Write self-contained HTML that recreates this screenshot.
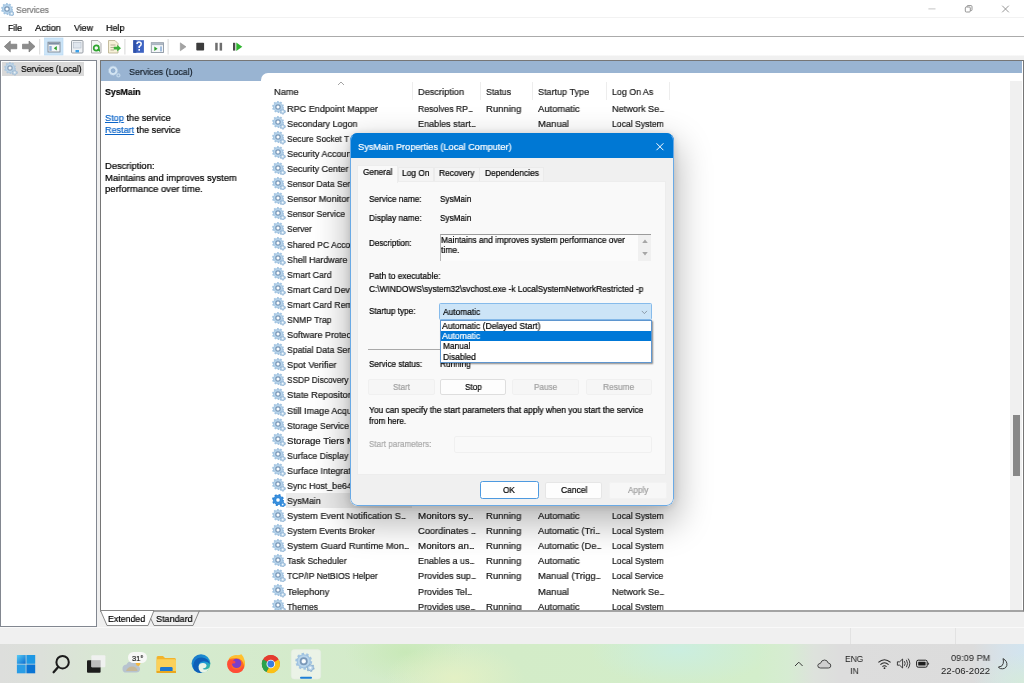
<!DOCTYPE html>
<html><head><meta charset="utf-8"><title>Services</title>
<style>
*{box-sizing:border-box;margin:0;padding:0}
html,body{width:1024px;height:683px;overflow:hidden;background:#f0f0f0}
body{font-family:"Liberation Sans",sans-serif;font-size:10px;color:#000;position:relative;line-height:13px}
.abs{position:absolute}
.t{position:absolute;white-space:nowrap;transform-origin:0 0;will-change:transform;-webkit-text-stroke:.22px}
.lk{color:#0a64c8;text-decoration:underline}
.el{letter-spacing:-1.2px}
.g,.gs{position:absolute;left:272.2px;width:13.5px;height:13.5px}
#titlebar{left:0;top:0;width:1024px;height:18px;background:#fff;border-bottom:1px solid #f2f2f2}
#menubar{left:0;top:18px;width:1024px;height:18px;background:#fff}
#toolbar{left:0;top:36px;width:1024px;height:24px;background:linear-gradient(#fff 0,#fff 17.5px,#f0f0f0 19.5px,#f0f0f0 24px);border-top:1px solid #ababab}
#left{left:0;top:60px;width:97px;height:566.6px;background:#fff;border:1px solid #828790}
#right{left:99.5px;top:59.5px;width:924px;height:552px;background:#fff;border:1.5px solid #767676;border-bottom:2px solid #a4a4a4}
#hdr{left:101px;top:61px;width:921.4px;height:20.2px;background:#99b4d2}
#list{left:261.3px;top:72.8px;width:760.7px;height:537px;background:#fff;border-radius:7px 0 0 0}
#scroll{left:1010px;top:81px;width:12px;height:529px;background:#f0f0f0}
#thumb{left:1012.5px;top:415px;width:7.5px;height:60.5px;background:#888}
#status{left:0;top:626.6px;width:1024px;height:17.4px;background:#f0f0f0;border-top:1px solid #f9f9f9}
#taskbar{left:0;top:644px;width:1024px;height:39px;background:radial-gradient(ellipse 70px 34px at 455px 34px,rgba(230,241,196,.85),rgba(230,241,196,0) 100%),radial-gradient(ellipse 60px 30px at 405px 8px,rgba(198,232,180,.8),rgba(198,232,180,0) 100%),radial-gradient(ellipse 90px 36px at 680px 6px,rgba(202,238,226,.9),rgba(202,238,226,0) 100%),radial-gradient(ellipse 50px 30px at 1024px 39px,rgba(214,236,214,.8),rgba(214,236,214,0) 100%),linear-gradient(90deg,#dddedc 0%,#dce0da 4%,#d9e6d4 9%,#d6ead0 14%,#d4ebcb 30%,#d3ecc8 50%,#d3edc9 65%,#d3eecb 74%,#d6ecd2 77%,#dde2dc 79.5%,#dddddd 82%,#dcdcdc 95%,#d6e2ea 98%,#d2e4ef 100%)}
#rows{left:0;top:0;width:1022px;height:609.5px;overflow:hidden}
/* dialog */
#dshadow{left:350px;top:133.2px;width:324.1px;height:372.6px;border-radius:8px;box-shadow:0 14px 34px 4px rgba(0,0,0,.28),0 1px 8px rgba(0,0,0,.15)}
#dlg{left:350px;top:133.2px;width:324.1px;height:372.6px;background:#f0f0f0;border-radius:7.5px;overflow:hidden}
#dlg:after{content:"";position:absolute;left:0;top:0;right:0;bottom:0;border:1.9px solid #6aaae5;border-radius:7.5px;border-top-color:#0078d4}
#dtitle{left:-1px;top:-0.2px;width:326px;height:25.4px;background:#0078d4}
#dtab{left:6px;top:47.8px;width:309.3px;height:294px;background:#f9f9f9;border:1px solid #ededed}
.tab{position:absolute;top:33.8px;height:14px;background:#f4f4f4;border:1px solid #ebebeb;border-bottom:none}
.btn{position:absolute;border:1px solid #dedede;background:#fdfdfd;border-radius:2px}
.btn.dis{border-color:#f0f0f0;background:#f6f6f6}
</style></head><body>
<svg width="0" height="0" style="position:absolute"><defs>
<g id="gear">
 <circle cx="6" cy="6" r="5.1" fill="none" stroke="#a2c4e1" stroke-width="1.7" stroke-dasharray="1.7 1.504"/>
 <circle cx="6" cy="6" r="4.6" fill="#b7d4eb" stroke="#9fc2e0" stroke-width=".8"/>
 <circle cx="6" cy="6" r="2.2" fill="#e3eef7" stroke="#7a98b8" stroke-width="1.2"/>
 <circle cx="6" cy="6" r="1.2" fill="#fbfdfe"/>
 <circle cx="10.7" cy="10.6" r="2.3" fill="none" stroke="#8fb2d2" stroke-width="1.3" stroke-dasharray="1.1 1.31"/>
 <circle cx="10.7" cy="10.6" r="2.1" fill="#bcd6ea" stroke="#8fb2d2" stroke-width=".7"/>
 <circle cx="10.7" cy="10.6" r=".8" fill="#f4f8fb"/>
</g>
<g id="gears">
 <circle cx="6" cy="6" r="5.1" fill="none" stroke="#2b83d4" stroke-width="1.7" stroke-dasharray="2 2.005"/>
 <circle cx="6" cy="6" r="4.6" fill="#3d93e0" stroke="#2b83d4" stroke-width=".8"/>
 <circle cx="6" cy="6" r="2.7" fill="#5aa6e8" stroke="#2b83d4" stroke-width=".8"/>
 <circle cx="6" cy="6" r="1.7" fill="#fff"/>
 <circle cx="10.7" cy="10.6" r="2.3" fill="none" stroke="#2b83d4" stroke-width="1.3" stroke-dasharray="1.1 1.31"/>
 <circle cx="10.7" cy="10.6" r="2.1" fill="#4a9be3" stroke="#2b83d4" stroke-width=".7"/>
 <circle cx="10.7" cy="10.6" r=".8" fill="#fff"/>
</g>
</defs></svg>

<div id="titlebar" class="abs"></div>
<div id="menubar" class="abs"></div>
<div id="toolbar" class="abs"></div>
<div id="left" class="abs"></div>
<div id="right" class="abs"></div>
<div id="hdr" class="abs"></div>
<div id="list" class="abs"></div>
<div id="scroll" class="abs"></div>
<div id="thumb" class="abs"></div>
<div id="status" class="abs"></div>
<div class="abs" style="left:849.5px;top:628px;width:1px;height:16px;background:#e2e2e2"></div>
<div class="abs" style="left:955px;top:628px;width:1px;height:16px;background:#e2e2e2"></div>
<div id="taskbar" class="abs"></div>

<!-- bottom view tabs -->
<svg class="abs" style="left:98px;top:609px" width="110" height="18" viewBox="0 0 110 18">
 <path d="M2.5 1.5 L9 16.5 L50 16.5 L56 1.5 Z" fill="#fff" stroke="#7d7d7d" stroke-width="0.9"/>
 <path d="M52.7 9.5 L56 16.5 L95 16.5 L101.5 1.5" fill="none" stroke="#7d7d7d" stroke-width="0.9"/>
 <path d="M56.5 1.5 L101.5 1.5" fill="none" stroke="#a0a0a0" stroke-width="0.9"/>
</svg>

<!-- title icon -->
<svg class="abs" style="left:0.8px;top:2.6px;width:13.5px;height:13.5px" viewBox="0 0 13.5 13.5"><use href="#gear"/></svg>
<!-- left tree icon -->

<!-- header icon (magnifier-like) -->
<svg class="abs" style="left:107px;top:64px;width:16px;height:16px" viewBox="0 0 16 16">
 <circle cx="6.1" cy="6.7" r="3.3" fill="none" stroke="#d3e4f2" stroke-width="2.3"/>
 <circle cx="6.1" cy="6.7" r="4.6" fill="none" stroke="#bcd3e8" stroke-width=".7" stroke-dasharray="1.6 1.3"/>
 <circle cx="6.1" cy="6.7" r="1.9" fill="none" stroke="#86a8cb" stroke-width=".7"/>
 <circle cx="11.4" cy="11.4" r="1.5" fill="none" stroke="#c3d8ea" stroke-width="1.3"/>
</svg>

<!-- window controls -->
<svg class="abs" style="left:920px;top:0" width="104" height="18" viewBox="0 0 104 18">
 <path d="M8.4 8.9 H15.5" stroke="#c4c4c4" stroke-width="1"/>
 <rect x="45.3" y="7" width="5" height="5" rx="1" fill="none" stroke="#8a8a8a" stroke-width="0.9"/>
 <path d="M47 7 V6.3 Q47 5.6 47.8 5.6 H51 Q52 5.6 52 6.6 V9.8 Q52 10.6 51.2 10.6 H50.5" fill="none" stroke="#8a8a8a" stroke-width="0.9"/>
 <path d="M82.2 5.7 L88.8 12.3 M88.8 5.7 L82.2 12.3" stroke="#8a8a8a" stroke-width="0.9"/>
</svg>

<!-- toolbar icons -->
<svg class="abs" style="left:0;top:37px" width="250" height="20" viewBox="0 0 250 20">
 <!-- back / forward -->
 <path d="M4.3 9.5 L10.3 4 V7.2 H16.8 V11.8 H10.3 V15 Z" fill="#8c8c8c" stroke="#6e6e6e" stroke-width=".6"/>
 <path d="M35 9.5 L29 4 V7.2 H22.5 V11.8 H29 V15 Z" fill="#8c8c8c" stroke="#6e6e6e" stroke-width=".6"/>
 <rect x="39.2" y="2" width="1" height="15.5" fill="#d8d8d8"/>
 <!-- selected button -->
 <rect x="44.6" y="1" width="18.4" height="17" fill="#cce4f7" stroke="#b3d7f3" stroke-width=".6"/>
 <rect x="48" y="5.2" width="12" height="9.8" fill="#f4f6f8" stroke="#7d8793" stroke-width=".9"/>
 <rect x="48.4" y="5.6" width="11.2" height="2" fill="#7f8fa3"/>
 <rect x="49.3" y="9" width="2.4" height="4.8" fill="#8fb0d8"/>
 <path d="M56.8 9 L53.8 11.3 L56.8 13.6 Z" fill="#2ca02c"/>
 <!-- properties sheet -->
 <rect x="71.5" y="3.5" width="11.5" height="12.5" rx="1" fill="#eef1f4" stroke="#8e959d" stroke-width=".9"/>
 <rect x="73.5" y="5.5" width="7.5" height="5.5" fill="#dfe6ee" stroke="#a9b4c0" stroke-width=".5"/>
 <rect x="75.5" y="13" width="3.5" height="2.4" fill="#3aa0e8"/>
 <!-- refresh -->
 <path d="M91.5 3.5 H98 L101 6.5 V16 H91.5 Z" fill="#f6f6f6" stroke="#9a9a9a" stroke-width=".8"/>
 <circle cx="96.3" cy="11" r="2.6" fill="none" stroke="#2fa52f" stroke-width="1.7"/>
 <path d="M96.6 12.2 L100 12.2 L100 15 Z" fill="#2fa52f"/>
 <!-- export -->
 <path d="M108.5 3.5 H115 L118 6.5 V16 H108.5 Z" fill="#f6f0d8" stroke="#b8ad8a" stroke-width=".8"/>
 <path d="M110.5 8 H115.5 M110.5 10.5 H114 M110.5 13 H114" stroke="#9a9478" stroke-width=".7"/>
 <path d="M113.8 9.8 H117.2 V7.8 L121 11.2 L117.2 14.6 V12.6 H113.8 Z" fill="#3bb03b"/>
 <rect x="124.4" y="2" width="1" height="15.5" fill="#d8d8d8"/>
 <!-- help -->
 <rect x="133.3" y="3.2" width="10.6" height="12.6" fill="#3d63c2"/>
 <rect x="133.3" y="3.2" width="3" height="12.6" fill="#2f51a8"/>
 <path d="M137 7 Q137 5 139 5 Q141.2 5 141.2 7 Q141.2 8.4 139.2 9.6 V11" fill="none" stroke="#fff" stroke-width="1.5"/>
 <rect x="138.4" y="12" width="1.6" height="1.7" fill="#fff"/>
 <!-- window w/ play -->
 <rect x="151.3" y="5.7" width="12.2" height="9.8" fill="#f4f6f8" stroke="#8d97a3" stroke-width=".9"/>
 <rect x="151.7" y="6.1" width="11.4" height="2" fill="#aab4c0"/>
 <path d="M154.3 9.6 L157.6 11.8 L154.3 14 Z" fill="#2ca02c"/>
 <rect x="160.2" y="9.4" width="1.6" height="5" fill="#8fb0d8"/>
 <rect x="167.6" y="2" width="1" height="15.5" fill="#d8d8d8"/>
 <!-- play / stop / pause / resume -->
 <path d="M180.3 5.8 L186 9.8 L180.3 13.8 Z" fill="#a3a3a3" stroke="#8c8c8c" stroke-width=".5"/>
 <rect x="196.3" y="5.8" width="7.8" height="7.8" rx=".8" fill="#3c3c3c"/>
 <rect x="215.2" y="5.8" width="2.5" height="7.8" fill="#6e6e6e"/>
 <rect x="219.6" y="5.8" width="2.5" height="7.8" fill="#6e6e6e"/>
 <rect x="233" y="5.8" width="2.3" height="7.8" fill="#4a4a4a"/>
 <path d="M236.3 5.4 L242.3 9.7 L236.3 14 Z" fill="#2fb52f"/>
</svg>

<div class="t" style="left:16.20px;top:3.00px;font-size:9.6px;line-height:13px;color:#7a7a7a;transform:scaleX(0.8936);">Services</div>
<div class="t" style="left:8.20px;top:21.00px;font-size:9.6px;line-height:13px;color:#000;transform:scaleX(0.9123);">File</div>
<div class="t" style="left:35.20px;top:21.00px;font-size:9.6px;line-height:13px;color:#000;transform:scaleX(0.9742);">Action</div>
<div class="t" style="left:74.20px;top:21.00px;font-size:9.6px;line-height:13px;color:#000;transform:scaleX(0.9205);">View</div>
<div class="t" style="left:106.00px;top:21.00px;font-size:9.6px;line-height:13px;color:#000;transform:scaleX(0.9327);">Help</div>
<div class="abs" style="left:2px;top:62px;width:82px;height:14px;background:#d9d9d9"></div>
<svg class="abs" style="left:4.2px;top:62.3px;width:13.5px;height:13.5px;opacity:.8" viewBox="0 0 13.5 13.5"><use href="#gear"/></svg>
<div class="t" style="left:20.80px;top:62.00px;font-size:9.6px;line-height:13px;color:#000;transform:scaleX(0.8819);">Services (Local)</div>
<div class="t" style="left:128.80px;top:65.00px;font-size:9.6px;line-height:13px;color:#17212c;transform:scaleX(0.9254);">Services (Local)</div>
<div class="t" style="left:105.20px;top:85.00px;font-size:9.6px;line-height:13px;color:#000;font-weight:bold;transform:scaleX(0.9119);">SysMain</div>
<div class="t" style="left:105.20px;top:111.00px;font-size:9.6px;line-height:13px;color:#000;transform:scaleX(0.9545);"><span class="lk">Stop</span> the service</div>
<div class="t" style="left:105.20px;top:123.00px;font-size:9.6px;line-height:13px;color:#000;transform:scaleX(0.9411);"><span class="lk">Restart</span> the service</div>
<div class="t" style="left:105.20px;top:159.00px;font-size:9.6px;line-height:13px;color:#000;transform:scaleX(0.9766);">Description:</div>
<div class="t" style="left:105.20px;top:171.00px;font-size:9.6px;line-height:13px;color:#000;transform:scaleX(0.9810);">Maintains and improves system</div>
<div class="t" style="left:105.20px;top:182.00px;font-size:9.6px;line-height:13px;color:#000;transform:scaleX(0.9910);">performance over time.</div>
<div class="t" style="left:274.30px;top:85.00px;font-size:9.6px;line-height:13px;color:#222;transform:scaleX(0.9636);">Name</div>
<div class="t" style="left:417.70px;top:85.00px;font-size:9.6px;line-height:13px;color:#222;transform:scaleX(0.9604);">Description</div>
<div class="t" style="left:486.00px;top:85.00px;font-size:9.6px;line-height:13px;color:#222;transform:scaleX(0.9186);">Status</div>
<div class="t" style="left:537.70px;top:85.00px;font-size:9.6px;line-height:13px;color:#222;transform:scaleX(0.9421);">Startup Type</div>
<div class="t" style="left:611.70px;top:85.00px;font-size:9.6px;line-height:13px;color:#222;transform:scaleX(0.9212);">Log On As</div>
<div class="abs" style="left:412.0px;top:82px;width:1px;height:18px;background:#ededed"></div>
<div class="abs" style="left:480.0px;top:82px;width:1px;height:18px;background:#ededed"></div>
<div class="abs" style="left:532.0px;top:82px;width:1px;height:18px;background:#ededed"></div>
<div class="abs" style="left:606.0px;top:82px;width:1px;height:18px;background:#ededed"></div>
<div class="abs" style="left:668.7px;top:82px;width:1px;height:18px;background:#ededed"></div>
<svg class="abs" style="left:337px;top:80.5px" width="8" height="5" viewBox="0 0 8 5"><path d="M1 4 L4 1 L7 4" fill="none" stroke="#9a9a9a" stroke-width="0.9"/></svg>
<div id="rows" class="abs">
<svg class="g" style="top:101.20px" viewBox="0 0 13.5 13.5"><use href="#gear"/></svg>
<div class="t" style="left:287.30px;top:102.00px;font-size:9.6px;line-height:13px;color:#1a1a1a;transform:scaleX(0.9474);">RPC Endpoint Mapper</div>
<div class="t" style="left:417.70px;top:102.00px;font-size:9.6px;line-height:13px;color:#1a1a1a;transform:scaleX(0.9019);">Resolves RP<span class="el">...</span></div>
<div class="t" style="left:485.80px;top:102.00px;font-size:9.6px;line-height:13px;color:#1a1a1a;transform:scaleX(0.9871);">Running</div>
<div class="t" style="left:537.70px;top:102.00px;font-size:9.6px;line-height:13px;color:#1a1a1a;transform:scaleX(0.9796);">Automatic</div>
<div class="t" style="left:611.70px;top:102.00px;font-size:9.6px;line-height:13px;color:#1a1a1a;transform:scaleX(0.9519);">Network Se<span class="el">...</span></div>
<svg class="g" style="top:116.29px" viewBox="0 0 13.5 13.5"><use href="#gear"/></svg>
<div class="t" style="left:287.30px;top:117.00px;font-size:9.6px;line-height:13px;color:#1a1a1a;transform:scaleX(0.9380);">Secondary Logon</div>
<div class="t" style="left:417.70px;top:117.00px;font-size:9.6px;line-height:13px;color:#1a1a1a;transform:scaleX(0.9432);">Enables start<span class="el">...</span></div>
<div class="t" style="left:537.70px;top:117.00px;font-size:9.6px;line-height:13px;color:#1a1a1a;transform:scaleX(0.9845);">Manual</div>
<div class="t" style="left:611.70px;top:117.00px;font-size:9.6px;line-height:13px;color:#1a1a1a;transform:scaleX(0.9003);">Local System</div>
<svg class="g" style="top:131.38px" viewBox="0 0 13.5 13.5"><use href="#gear"/></svg>
<div class="t" style="left:287.30px;top:132.00px;font-size:9.6px;line-height:13px;color:#1a1a1a;transform:scaleX(0.8759);">Secure Socket T</div>
<svg class="g" style="top:146.47px" viewBox="0 0 13.5 13.5"><use href="#gear"/></svg>
<div class="t" style="left:287.30px;top:147.00px;font-size:9.6px;line-height:13px;color:#1a1a1a;transform:scaleX(0.9369);">Security Accoun</div>
<svg class="g" style="top:161.56px" viewBox="0 0 13.5 13.5"><use href="#gear"/></svg>
<div class="t" style="left:287.30px;top:162.00px;font-size:9.6px;line-height:13px;color:#1a1a1a;transform:scaleX(0.9283);">Security Center</div>
<svg class="g" style="top:176.65px" viewBox="0 0 13.5 13.5"><use href="#gear"/></svg>
<div class="t" style="left:287.30px;top:177.00px;font-size:9.6px;line-height:13px;color:#1a1a1a;transform:scaleX(0.8912);">Sensor Data Ser</div>
<svg class="g" style="top:191.74px" viewBox="0 0 13.5 13.5"><use href="#gear"/></svg>
<div class="t" style="left:287.30px;top:192.00px;font-size:9.6px;line-height:13px;color:#1a1a1a;transform:scaleX(0.9609);">Sensor Monitor</div>
<svg class="g" style="top:206.83px" viewBox="0 0 13.5 13.5"><use href="#gear"/></svg>
<div class="t" style="left:287.30px;top:207.00px;font-size:9.6px;line-height:13px;color:#1a1a1a;transform:scaleX(0.8926);">Sensor Service</div>
<svg class="g" style="top:221.92px" viewBox="0 0 13.5 13.5"><use href="#gear"/></svg>
<div class="t" style="left:287.30px;top:222.00px;font-size:9.6px;line-height:13px;color:#1a1a1a;transform:scaleX(0.8772);">Server</div>
<svg class="g" style="top:237.01px" viewBox="0 0 13.5 13.5"><use href="#gear"/></svg>
<div class="t" style="left:287.30px;top:238.00px;font-size:9.6px;line-height:13px;color:#1a1a1a;transform:scaleX(0.8988);">Shared PC Acco</div>
<svg class="g" style="top:252.10px" viewBox="0 0 13.5 13.5"><use href="#gear"/></svg>
<div class="t" style="left:287.30px;top:253.00px;font-size:9.6px;line-height:13px;color:#1a1a1a;transform:scaleX(0.9205);">Shell Hardware</div>
<svg class="g" style="top:267.19px" viewBox="0 0 13.5 13.5"><use href="#gear"/></svg>
<div class="t" style="left:287.30px;top:268.00px;font-size:9.6px;line-height:13px;color:#1a1a1a;transform:scaleX(0.9083);">Smart Card</div>
<svg class="g" style="top:282.28px" viewBox="0 0 13.5 13.5"><use href="#gear"/></svg>
<div class="t" style="left:287.30px;top:283.00px;font-size:9.6px;line-height:13px;color:#1a1a1a;transform:scaleX(0.9136);">Smart Card Dev</div>
<svg class="g" style="top:297.37px" viewBox="0 0 13.5 13.5"><use href="#gear"/></svg>
<div class="t" style="left:287.30px;top:298.00px;font-size:9.6px;line-height:13px;color:#1a1a1a;transform:scaleX(0.9136);">Smart Card Rem</div>
<svg class="g" style="top:312.46px" viewBox="0 0 13.5 13.5"><use href="#gear"/></svg>
<div class="t" style="left:287.30px;top:313.00px;font-size:9.6px;line-height:13px;color:#1a1a1a;transform:scaleX(0.9021);">SNMP Trap</div>
<svg class="g" style="top:327.55px" viewBox="0 0 13.5 13.5"><use href="#gear"/></svg>
<div class="t" style="left:287.30px;top:328.00px;font-size:9.6px;line-height:13px;color:#1a1a1a;transform:scaleX(0.9369);">Software Protec</div>
<svg class="g" style="top:342.64px" viewBox="0 0 13.5 13.5"><use href="#gear"/></svg>
<div class="t" style="left:287.30px;top:343.00px;font-size:9.6px;line-height:13px;color:#1a1a1a;transform:scaleX(0.9053);">Spatial Data Ser</div>
<svg class="g" style="top:357.73px" viewBox="0 0 13.5 13.5"><use href="#gear"/></svg>
<div class="t" style="left:287.30px;top:358.00px;font-size:9.6px;line-height:13px;color:#1a1a1a;transform:scaleX(0.9480);">Spot Verifier</div>
<svg class="g" style="top:372.82px" viewBox="0 0 13.5 13.5"><use href="#gear"/></svg>
<div class="t" style="left:287.30px;top:373.00px;font-size:9.6px;line-height:13px;color:#1a1a1a;transform:scaleX(0.8672);">SSDP Discovery</div>
<svg class="g" style="top:387.91px" viewBox="0 0 13.5 13.5"><use href="#gear"/></svg>
<div class="t" style="left:287.30px;top:388.00px;font-size:9.6px;line-height:13px;color:#1a1a1a;transform:scaleX(0.9639);">State Repositor</div>
<svg class="g" style="top:403.00px" viewBox="0 0 13.5 13.5"><use href="#gear"/></svg>
<div class="t" style="left:287.30px;top:404.00px;font-size:9.6px;line-height:13px;color:#1a1a1a;transform:scaleX(0.9432);">Still Image Acqu</div>
<svg class="g" style="top:418.09px" viewBox="0 0 13.5 13.5"><use href="#gear"/></svg>
<div class="t" style="left:287.30px;top:419.00px;font-size:9.6px;line-height:13px;color:#1a1a1a;transform:scaleX(0.9077);">Storage Service</div>
<svg class="g" style="top:433.18px" viewBox="0 0 13.5 13.5"><use href="#gear"/></svg>
<div class="t" style="left:287.30px;top:434.00px;font-size:9.6px;line-height:13px;color:#1a1a1a;transform:scaleX(1.0032);">Storage Tiers M</div>
<svg class="g" style="top:448.27px" viewBox="0 0 13.5 13.5"><use href="#gear"/></svg>
<div class="t" style="left:287.30px;top:449.00px;font-size:9.6px;line-height:13px;color:#1a1a1a;transform:scaleX(0.9130);">Surface Display</div>
<svg class="g" style="top:463.36px" viewBox="0 0 13.5 13.5"><use href="#gear"/></svg>
<div class="t" style="left:287.30px;top:464.00px;font-size:9.6px;line-height:13px;color:#1a1a1a;transform:scaleX(0.9351);">Surface Integrat</div>
<svg class="g" style="top:478.45px" viewBox="0 0 13.5 13.5"><use href="#gear"/></svg>
<div class="t" style="left:287.30px;top:479.00px;font-size:9.6px;line-height:13px;color:#1a1a1a;transform:scaleX(0.9203);">Sync Host_be64</div>
<div class="abs" style="left:285.5px;top:493.44px;width:126px;height:14.2px;background:#ebebeb"></div>
<svg class="gs" style="top:493.54px" viewBox="0 0 13.5 13.5"><use href="#gears"/></svg>
<div class="t" style="left:287.30px;top:494.00px;font-size:9.6px;line-height:13px;color:#1a1a1a;transform:scaleX(0.9154);">SysMain</div>
<svg class="g" style="top:508.63px" viewBox="0 0 13.5 13.5"><use href="#gear"/></svg>
<div class="t" style="left:287.30px;top:509.00px;font-size:9.6px;line-height:13px;color:#1a1a1a;transform:scaleX(0.9615);">System Event Notification S<span class="el">...</span></div>
<div class="t" style="left:417.70px;top:509.00px;font-size:9.6px;line-height:13px;color:#1a1a1a;transform:scaleX(1.0218);">Monitors sy<span class="el">...</span></div>
<div class="t" style="left:485.80px;top:509.00px;font-size:9.6px;line-height:13px;color:#1a1a1a;transform:scaleX(0.9871);">Running</div>
<div class="t" style="left:537.70px;top:509.00px;font-size:9.6px;line-height:13px;color:#1a1a1a;transform:scaleX(0.9796);">Automatic</div>
<div class="t" style="left:611.70px;top:509.00px;font-size:9.6px;line-height:13px;color:#1a1a1a;transform:scaleX(0.9003);">Local System</div>
<svg class="g" style="top:523.72px" viewBox="0 0 13.5 13.5"><use href="#gear"/></svg>
<div class="t" style="left:287.30px;top:524.00px;font-size:9.6px;line-height:13px;color:#1a1a1a;transform:scaleX(0.9258);">System Events Broker</div>
<div class="t" style="left:417.70px;top:524.00px;font-size:9.6px;line-height:13px;color:#1a1a1a;transform:scaleX(0.9703);">Coordinates <span class="el">...</span></div>
<div class="t" style="left:485.80px;top:524.00px;font-size:9.6px;line-height:13px;color:#1a1a1a;transform:scaleX(0.9871);">Running</div>
<div class="t" style="left:537.70px;top:524.00px;font-size:9.6px;line-height:13px;color:#1a1a1a;transform:scaleX(0.9609);">Automatic (Tri<span class="el">...</span></div>
<div class="t" style="left:611.70px;top:524.00px;font-size:9.6px;line-height:13px;color:#1a1a1a;transform:scaleX(0.9003);">Local System</div>
<svg class="g" style="top:538.81px" viewBox="0 0 13.5 13.5"><use href="#gear"/></svg>
<div class="t" style="left:287.30px;top:539.00px;font-size:9.6px;line-height:13px;color:#1a1a1a;transform:scaleX(0.9664);">System Guard Runtime Mon<span class="el">...</span></div>
<div class="t" style="left:417.70px;top:539.00px;font-size:9.6px;line-height:13px;color:#1a1a1a;transform:scaleX(1.0169);">Monitors an<span class="el">...</span></div>
<div class="t" style="left:485.80px;top:539.00px;font-size:9.6px;line-height:13px;color:#1a1a1a;transform:scaleX(0.9871);">Running</div>
<div class="t" style="left:537.70px;top:539.00px;font-size:9.6px;line-height:13px;color:#1a1a1a;transform:scaleX(0.9597);">Automatic (De<span class="el">...</span></div>
<div class="t" style="left:611.70px;top:539.00px;font-size:9.6px;line-height:13px;color:#1a1a1a;transform:scaleX(0.9003);">Local System</div>
<svg class="g" style="top:553.90px" viewBox="0 0 13.5 13.5"><use href="#gear"/></svg>
<div class="t" style="left:287.30px;top:554.00px;font-size:9.6px;line-height:13px;color:#1a1a1a;transform:scaleX(0.9098);">Task Scheduler</div>
<div class="t" style="left:417.70px;top:554.00px;font-size:9.6px;line-height:13px;color:#1a1a1a;transform:scaleX(0.9265);">Enables a us<span class="el">...</span></div>
<div class="t" style="left:485.80px;top:554.00px;font-size:9.6px;line-height:13px;color:#1a1a1a;transform:scaleX(0.9871);">Running</div>
<div class="t" style="left:537.70px;top:554.00px;font-size:9.6px;line-height:13px;color:#1a1a1a;transform:scaleX(0.9796);">Automatic</div>
<div class="t" style="left:611.70px;top:554.00px;font-size:9.6px;line-height:13px;color:#1a1a1a;transform:scaleX(0.9003);">Local System</div>
<svg class="g" style="top:568.99px" viewBox="0 0 13.5 13.5"><use href="#gear"/></svg>
<div class="t" style="left:287.30px;top:569.00px;font-size:9.6px;line-height:13px;color:#1a1a1a;transform:scaleX(0.8871);">TCP/IP NetBIOS Helper</div>
<div class="t" style="left:417.70px;top:569.00px;font-size:9.6px;line-height:13px;color:#1a1a1a;transform:scaleX(0.9532);">Provides sup<span class="el">...</span></div>
<div class="t" style="left:485.80px;top:569.00px;font-size:9.6px;line-height:13px;color:#1a1a1a;transform:scaleX(0.9871);">Running</div>
<div class="t" style="left:537.70px;top:569.00px;font-size:9.6px;line-height:13px;color:#1a1a1a;transform:scaleX(0.9784);">Manual (Trigg<span class="el">...</span></div>
<div class="t" style="left:611.70px;top:569.00px;font-size:9.6px;line-height:13px;color:#1a1a1a;transform:scaleX(0.8881);">Local Service</div>
<svg class="g" style="top:584.08px" viewBox="0 0 13.5 13.5"><use href="#gear"/></svg>
<div class="t" style="left:287.30px;top:585.00px;font-size:9.6px;line-height:13px;color:#1a1a1a;transform:scaleX(0.9663);">Telephony</div>
<div class="t" style="left:417.70px;top:585.00px;font-size:9.6px;line-height:13px;color:#1a1a1a;transform:scaleX(0.9417);">Provides Tel<span class="el">...</span></div>
<div class="t" style="left:537.70px;top:585.00px;font-size:9.6px;line-height:13px;color:#1a1a1a;transform:scaleX(0.9845);">Manual</div>
<div class="t" style="left:611.70px;top:585.00px;font-size:9.6px;line-height:13px;color:#1a1a1a;transform:scaleX(0.9519);">Network Se<span class="el">...</span></div>
<svg class="g" style="top:599.17px" viewBox="0 0 13.5 13.5"><use href="#gear"/></svg>
<div class="t" style="left:287.30px;top:600.00px;font-size:9.6px;line-height:13px;color:#1a1a1a;transform:scaleX(0.8974);">Themes</div>
<div class="t" style="left:417.70px;top:600.00px;font-size:9.6px;line-height:13px;color:#1a1a1a;transform:scaleX(0.9415);">Provides use<span class="el">...</span></div>
<div class="t" style="left:485.80px;top:600.00px;font-size:9.6px;line-height:13px;color:#1a1a1a;transform:scaleX(0.9871);">Running</div>
<div class="t" style="left:537.70px;top:600.00px;font-size:9.6px;line-height:13px;color:#1a1a1a;transform:scaleX(0.9796);">Automatic</div>
<div class="t" style="left:611.70px;top:600.00px;font-size:9.6px;line-height:13px;color:#1a1a1a;transform:scaleX(0.9003);">Local System</div>
</div>
<div class="t" style="left:107.80px;top:612.00px;font-size:9.6px;line-height:13px;color:#000;transform:scaleX(0.9172);">Extended</div>
<div class="t" style="left:156.00px;top:612.00px;font-size:9.6px;line-height:13px;color:#000;transform:scaleX(0.9416);">Standard</div>

<!-- dialog -->
<div id="dshadow" class="abs"></div>
<div id="dlg" class="abs"><div class="abs" style="left:1px;top:-0.2px;width:323px;height:372px">
 <div id="dtitle" class="abs"></div>
 <svg class="abs" style="left:303.5px;top:8.5px" width="10" height="10" viewBox="0 0 10 10"><path d="M1.5 1.3 L8.4 8.2 M8.4 1.3 L1.5 8.2" stroke="#fff" stroke-width="1"/></svg>
 <div class="tab" style="left:46.6px;width:36.4px"></div>
 <div class="tab" style="left:82.6px;width:46px"></div>
 <div class="tab" style="left:128.2px;width:64.4px"></div>
 <div id="dtab" class="abs"></div>
 <div class="abs" style="left:6px;top:31.6px;width:40.8px;height:18px;background:#f9f9f9;border:1px solid #ededed;border-bottom:none"></div>
 <!-- description box -->
 <div class="abs" style="left:88.7px;top:100.6px;width:211.5px;height:27.4px;background:#fbfbfb;border-top:1px solid #9b9b9b;border-left:1px solid #b8b8b8"></div>
 <div class="abs" style="left:287.4px;top:101.6px;width:12.8px;height:26.4px;background:#f0f0f0"></div>
 <svg class="abs" style="left:290px;top:105px" width="8" height="20" viewBox="0 0 8 20"><path d="M1.2 5 L4 1.6 L6.8 5 Z M1.2 14 L4 17.4 L6.8 14 Z" fill="#a6a6a6"/></svg>
 <!-- separator -->
 <div class="abs" style="left:17.3px;top:216.4px;width:283px;height:1px;background:#a9a9a9"></div>
 <div class="t" style="left:7.00px;top:7.00px;font-size:9.6px;line-height:13px;color:#fff;transform:scaleX(0.9601);">SysMain Properties (Local Computer)</div>
<div class="t" style="left:11.80px;top:33.00px;font-size:9.0px;line-height:12px;color:#000;transform:scaleX(0.9176);">General</div>
<div class="t" style="left:50.50px;top:34.00px;font-size:9.0px;line-height:12px;color:#000;transform:scaleX(0.9316);">Log On</div>
<div class="t" style="left:87.80px;top:34.00px;font-size:9.0px;line-height:12px;color:#000;transform:scaleX(0.9310);">Recovery</div>
<div class="t" style="left:134.20px;top:34.00px;font-size:9.0px;line-height:12px;color:#000;transform:scaleX(0.9382);">Dependencies</div>
<div class="t" style="left:17.70px;top:60.00px;font-size:9.0px;line-height:12px;color:#000;transform:scaleX(0.9146);">Service name:</div>
<div class="t" style="left:89.00px;top:60.00px;font-size:9.0px;line-height:12px;color:#000;transform:scaleX(0.9069);">SysMain</div>
<div class="t" style="left:17.70px;top:79.00px;font-size:9.0px;line-height:12px;color:#000;transform:scaleX(0.9226);">Display name:</div>
<div class="t" style="left:89.00px;top:79.00px;font-size:9.0px;line-height:12px;color:#000;transform:scaleX(0.9069);">SysMain</div>
<div class="t" style="left:17.70px;top:104.00px;font-size:9.0px;line-height:12px;color:#000;transform:scaleX(0.8965);">Description:</div>
<div class="t" style="left:90.00px;top:101.00px;font-size:9.0px;line-height:12px;color:#000;transform:scaleX(0.9243);">Maintains and improves system performance over</div>
<div class="t" style="left:90.00px;top:111.00px;font-size:9.0px;line-height:12px;color:#000;transform:scaleX(0.9494);">time.</div>
<div class="t" style="left:17.70px;top:137.00px;font-size:9.0px;line-height:12px;color:#000;transform:scaleX(0.9281);">Path to executable:</div>
<div class="t" style="left:17.70px;top:150.00px;font-size:9.0px;line-height:12px;color:#000;transform:scaleX(0.9269);">C:\WINDOWS\system32\svchost.exe -k LocalSystemNetworkRestricted -p</div>
<div class="t" style="left:17.70px;top:172.00px;font-size:9.0px;line-height:12px;color:#000;transform:scaleX(0.9112);">Startup type:</div>
<div class="t" style="left:17.70px;top:225.00px;font-size:9.0px;line-height:12px;color:#000;transform:scaleX(0.9011);">Service status:</div>
<div class="t" style="left:89.20px;top:225.00px;font-size:9.0px;line-height:12px;color:#000;transform:scaleX(0.9187);">Running</div>
<div class="t" style="left:17.70px;top:271.00px;font-size:9.0px;line-height:12px;color:#000;transform:scaleX(0.9322);">You can specify the start parameters that apply when you start the service</div>
<div class="t" style="left:17.70px;top:282.00px;font-size:9.0px;line-height:12px;color:#000;transform:scaleX(0.9050);">from here.</div>
<div class="t" style="left:17.70px;top:305.00px;font-size:9.0px;line-height:12px;color:#a9a9a9;transform:scaleX(0.8975);">Start parameters:</div>
 <!-- combo -->
 <div class="abs" style="left:88.4px;top:170px;width:212.8px;height:17px;background:#cce4f7;border:1px solid #86bbeb;border-radius:1.5px"></div>
 <svg class="abs" style="left:290px;top:176.5px" width="7" height="5" viewBox="0 0 7 5"><path d="M0.8 0.9 L3.4 3.6 L6 0.9" fill="none" stroke="#7d8a97" stroke-width=".8"/></svg>
 <!-- dropdown list -->
 <div class="abs" style="left:88.6px;top:186.8px;width:212px;height:43px;background:#fff;border:1px solid #5f96cf;box-shadow:1px 1px 1.5px rgba(0,0,0,.45)"></div>
 <div class="abs" style="left:89.6px;top:198px;width:210px;height:10.2px;background:#0078d7"></div>
 <!-- buttons -->
 <div class="btn dis" style="left:17.3px;top:245.6px;width:66.3px;height:16.8px"></div>
 <div class="btn" style="left:89.2px;top:245.6px;width:65.8px;height:16.8px"></div>
 <div class="btn dis" style="left:160.5px;top:245.6px;width:67.3px;height:16.8px"></div>
 <div class="btn dis" style="left:234.5px;top:245.6px;width:66.3px;height:16.8px"></div>
 <div class="btn dis" style="left:103.2px;top:302.8px;width:197.6px;height:17.3px;background:#f9f9f9;border-color:#f0f0f0"></div>
 <div class="btn" style="left:128.6px;top:348.3px;width:59.3px;height:17.3px;border:1.3px solid #4e9ae0;background:#fff;border-radius:2.5px"></div>
 <div class="btn" style="left:193.8px;top:348.8px;width:57.5px;height:16.8px;border-color:#e6e6e6"></div>
 <div class="btn dis" style="left:258.3px;top:348.8px;width:57.8px;height:16.8px;border-color:#f2f2f2;background:#f7f7f7"></div>
 <div class="t" style="left:92.30px;top:173.00px;font-size:9.0px;line-height:12px;color:#000;transform:scaleX(0.9299);">Automatic</div>
<div class="t" style="left:91.30px;top:187.00px;font-size:9.0px;line-height:12px;color:#000;transform:scaleX(0.9558);">Automatic (Delayed Start)</div>
<div class="t" style="left:91.30px;top:197.00px;font-size:9.0px;line-height:12px;color:#fff;transform:scaleX(0.9549);">Automatic</div>
<div class="t" style="left:91.50px;top:207.00px;font-size:9.0px;line-height:12px;color:#000;transform:scaleX(0.9248);">Manual</div>
<div class="t" style="left:91.50px;top:218.00px;font-size:9.0px;line-height:12px;color:#000;transform:scaleX(0.9369);">Disabled</div>
<div class="t" style="left:42.00px;top:248.00px;font-size:9.0px;line-height:12px;color:#a0a0a0;transform:scaleX(0.8952);">Start</div>
<div class="t" style="left:113.80px;top:248.00px;font-size:9.0px;line-height:12px;color:#000;transform:scaleX(0.9084);">Stop</div>
<div class="t" style="left:182.80px;top:248.00px;font-size:9.0px;line-height:12px;color:#a0a0a0;transform:scaleX(0.9053);">Pause</div>
<div class="t" style="left:251.80px;top:248.00px;font-size:9.0px;line-height:12px;color:#a0a0a0;transform:scaleX(0.9306);">Resume</div>
<div class="t" style="left:152.30px;top:351.00px;font-size:9.0px;line-height:12px;color:#000;transform:scaleX(0.9073);">OK</div>
<div class="t" style="left:209.70px;top:351.00px;font-size:9.0px;line-height:12px;color:#000;transform:scaleX(0.9417);">Cancel</div>
<div class="t" style="left:276.60px;top:351.00px;font-size:9.0px;line-height:12px;color:#a0a0a0;transform:scaleX(0.9067);">Apply</div>
</div></div>

<!-- taskbar icons -->
<svg class="abs" style="left:0;top:644px" width="1024" height="39" viewBox="0 0 1024 39">
 <defs>
  <linearGradient id="wg" x1="0" y1="0" x2="1" y2="1"><stop offset="0" stop-color="#58cdf5"/><stop offset="1" stop-color="#0a6bd0"/></linearGradient>
  <linearGradient id="eg" x1="0" y1="0" x2="1" y2="1"><stop offset="0" stop-color="#1a6fc4"/><stop offset=".6" stop-color="#1d9bd8"/><stop offset="1" stop-color="#4fd06a"/></linearGradient>
  <radialGradient id="fg" cx=".5" cy=".4" r=".6"><stop offset="0" stop-color="#8b3fd0"/><stop offset=".45" stop-color="#7a3cc8"/><stop offset=".55" stop-color="#ff5a2a"/><stop offset="1" stop-color="#ffb42a"/></radialGradient>
 </defs>
 <!-- windows -->
 <rect x="16.9" y="11" width="8.8" height="8.8" fill="url(#wg)"/><rect x="26.4" y="11" width="8.8" height="8.8" fill="#1e98e4"/>
 <rect x="16.9" y="20.5" width="8.8" height="8.8" fill="#2a9de6"/><rect x="26.4" y="20.5" width="8.8" height="8.8" fill="#0a74d4"/>
 <!-- search -->
 <circle cx="62.6" cy="18.2" r="6.2" fill="none" stroke="#1c1c1c" stroke-width="2"/>
 <path d="M58.2 23 L53.6 28.2" stroke="#1c1c1c" stroke-width="2.3" stroke-linecap="round"/>
 <!-- task view -->
 <rect x="87" y="16.2" width="13.6" height="12.6" rx="1" fill="#1d1d1d"/>
 <rect x="91.4" y="11.2" width="14" height="12" rx="1" fill="#f2f2f2" fill-opacity=".92"/>
 <rect x="91.4" y="16.2" width="9.2" height="7" fill="#bdbdbd"/>
 <!-- weather -->
 <circle cx="136" cy="18.5" r="4.5" fill="#f6b63c"/>
 <path d="M122.5 25.5 Q122 21 126.5 20.6 Q128 17 132 17.6 Q136 18 136.6 21.5 Q140.4 21.8 140 25.6 Q139.6 28.6 136 28.6 H126 Q122.8 28.6 122.5 25.5 Z" fill="#b7c3cf"/>
 <path d="M126 27 Q128 22 133 22.5 Q137 23 137.5 27 Z" fill="#c9b58a" fill-opacity=".8"/>
 <rect x="128" y="8" width="19" height="11" rx="5.5" fill="#f7f8f6"/>
 <!-- explorer -->
 <path d="M156.6 13.5 Q156.6 12 158 12 H163 L165 14 H174.5 Q176 14 176 15.5 V27.5 Q176 29 174.5 29 H158 Q156.6 29 156.6 27.5 Z" fill="#f2b32c"/>
 <rect x="156.6" y="15.2" width="19.4" height="13.8" rx="1.2" fill="#fbd15a"/>
 <path d="M160 24.2 Q160 23 161.2 23 H171.4 Q172.6 23 172.6 24.2 V29 H160 Z" fill="#1f78d0"/>
 <rect x="156.6" y="27" width="19.4" height="2" fill="#e9a820"/>
 <!-- edge -->
 <circle cx="201" cy="19.6" r="9.4" fill="url(#eg)"/>
 <path d="M193 22 Q194 13 202 13.4 Q209 14 210 20 Q207 16.8 202.6 17.4 Q198.4 18.2 198.6 22.4 Q199 27 205 27.6 Q199 30.6 195 27 Q193 25 193 22 Z" fill="#0f5fb8"/>
 <path d="M198.6 22.4 Q199 19 203 19 Q206.4 19.2 206.6 22 Q206 24.6 202.6 24.4 Q205 27 209 24 Q207 29 202 28.6 Q198.4 27 198.6 22.4Z" fill="#e8f4e8"/>
 <!-- firefox -->
 <circle cx="236" cy="20.2" r="8.8" fill="#ff6a26"/>
 <path d="M228.6 15 Q231.6 11 236 11.3 Q239.6 11.4 241.4 10.2 Q243.8 12.6 244.6 16.4 Q245.4 20 244.4 23 Q243.4 14.4 236 14.2 Q231.6 14.4 228.6 15Z" fill="#ffc02e"/>
 <circle cx="236.6" cy="19.4" r="4.7" fill="#7a3ec8"/>
 <path d="M227.6 17.4 Q230 15.2 233.6 16.6 Q236.4 17.6 235 19.4 Q232 19 231.4 21.6 Q231.6 25 236 25.6 Q241 25.6 243.6 21.4 Q244.4 27.6 237 29 Q230 29.4 227.6 23 Q227 19.8 227.6 17.4Z" fill="#ff4b38" fill-opacity=".92"/>
 <!-- chrome -->
 <circle cx="270.8" cy="20" r="9" fill="#e43c2e"/>
 <path d="M270.8 20 L263 15.5 A9 9 0 0 0 266.4 27.9 Z" fill="#2ba24c"/>
 <path d="M270.8 20 L266.4 27.9 A9 9 0 0 0 278.6 15.5 L270.8 20Z" fill="#fbc116"/>
 <path d="M263 15.5 A9 9 0 0 1 278.6 15.5 L270.8 15.5 Z" fill="#e43c2e"/>
 <path d="M262 20 A9 9 0 0 0 266.4 27.9 L270.8 20 L263 15.5 Q262 17.6 262 20Z" fill="#2ba24c"/>
 <circle cx="270.8" cy="20" r="4.3" fill="#fff"/>
 <circle cx="270.8" cy="20" r="3.4" fill="#3b7de0"/>
 <!-- services active -->
 <rect x="291.3" y="5.6" width="29.4" height="29.4" rx="3" fill="#eef4ec" fill-opacity=".85" stroke="#e6ece4" stroke-width=".6"/>
 <g transform="translate(295.2,8.8) scale(1.42)"><use href="#gear"/></g>
 <rect x="300" y="32.8" width="12" height="2" rx="1" fill="#1f7fd6"/>
 <!-- tray -->
 <path d="M795 22 L798.8 18.2 L802.6 22" fill="none" stroke="#3a3a3a" stroke-width="1"/>
 <path d="M820.4 24 Q817.6 24 817.8 21.4 Q818.2 19.4 820.4 19.4 Q821.4 16 824.6 16 Q827.6 16.2 828.2 19 Q831 19.4 830.8 22 Q830.6 24 828.4 24 Z" fill="#cfcfcf" stroke="#3a3a3a" stroke-width=".9"/>
 <path d="M878.4 18.4 Q884.4 13 890.6 18.4 M880.4 20.6 Q884.4 17 888.6 20.6 M882.4 22.6 Q884.4 21 886.6 22.6" fill="none" stroke="#2a2a2a" stroke-width="1.1"/>
 <circle cx="884.5" cy="24.2" r=".9" fill="#2a2a2a"/>
 <path d="M897.4 17.8 H899.6 L902.6 15 V24 L899.6 21.2 H897.4 Z" fill="none" stroke="#2a2a2a" stroke-width=".9"/>
 <path d="M904.4 17.2 Q906 19.5 904.4 21.8 M906.4 15.8 Q908.8 19.5 906.4 23.2 M908.2 14.6 Q911.4 19.5 908.2 24.4" fill="none" stroke="#2a2a2a" stroke-width=".9"/>
 <rect x="916.6" y="16.2" width="10.6" height="7" rx="1.6" fill="none" stroke="#1e1e1e" stroke-width="1"/>
 <rect x="918.2" y="17.8" width="7.4" height="3.8" rx=".6" fill="#1e1e1e"/>
 <path d="M928 18.6 Q929.2 19.7 928 20.8" fill="none" stroke="#1e1e1e" stroke-width="1"/>
 <path d="M1003 14.6 Q1007.6 17 1006.8 21.6 Q1005.4 25.6 1000.4 24.6 Q998.8 24 998.4 23 Q1002.4 23 1003.2 19.6 Q1003.8 17 1003 14.6Z" fill="none" stroke="#2a2a2a" stroke-width=".9"/>
</svg>
<div class="t" style="left:845.40px;top:652.00px;font-size:9.6px;line-height:13px;color:#222;transform:scaleX(0.8805);-webkit-text-stroke:0;">ENG</div>
<div class="t" style="left:850.30px;top:664.00px;font-size:9.6px;line-height:13px;color:#222;transform:scaleX(0.9063);-webkit-text-stroke:0;">IN</div>
<div class="t" style="left:950.90px;top:651.00px;font-size:9.6px;line-height:13px;color:#222;transform:scaleX(0.9565);-webkit-text-stroke:0;">09:09 PM</div>
<div class="t" style="left:941.00px;top:664.00px;font-size:9.6px;line-height:13px;color:#222;transform:scaleX(1.0020);-webkit-text-stroke:0;">22-06-2022</div>
<div class="t" style="left:132.30px;top:653.00px;font-size:7.6px;line-height:11px;color:#222;transform:scaleX(0.9759);">31°</div>

</body></html>
